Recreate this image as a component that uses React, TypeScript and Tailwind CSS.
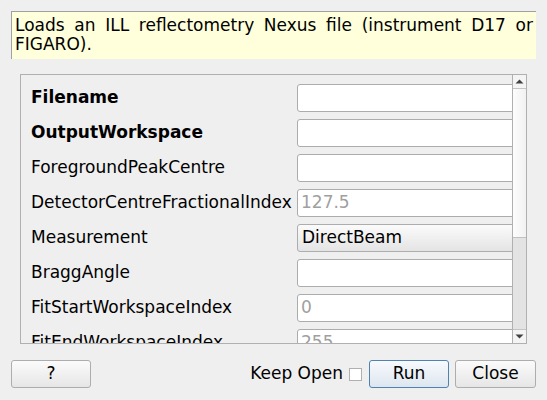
import React from "react";

const rows: { label: string; bold?: boolean; kind: "input" | "combo"; value?: string; placeholder?: string }[] = [
  { label: "Filename", bold: true, kind: "input" },
  { label: "OutputWorkspace", bold: true, kind: "input" },
  { label: "ForegroundPeakCentre", kind: "input" },
  { label: "DetectorCentreFractionalIndex", kind: "input", placeholder: "127.5" },
  { label: "Measurement", kind: "combo", value: "DirectBeam" },
  { label: "BraggAngle", kind: "input" },
  { label: "FitStartWorkspaceIndex", kind: "input", placeholder: "0" },
  { label: "FitEndWorkspaceIndex", kind: "input", placeholder: "255" },
];

export default function App() {
  return (
    <div
      className="w-[547px] h-[400px] bg-[#efefef] text-[17px] text-black overflow-hidden flex flex-col"
      style={{ fontFamily: '"DejaVu Sans", sans-serif' }}
    >
      <div className="mt-[11px] ml-[11px] w-[525px] h-[48px] border-l border-t border-[#a0a0a0] bg-[#ffffdc] pt-[4px] pl-[3px] pr-[3px] leading-[19px] text-justify">
        Loads an ILL reflectometry Nexus file (instrument D17 or FIGARO).
      </div>

      <div className="mt-[15px] ml-[20px] w-[507px] h-[270px] border border-[#b0b0b0] flex">
        <div className="w-[491px] h-full overflow-hidden">
          <div className="flex flex-col gap-[7px] pt-[9px] pl-[10px]">
            {rows.map((r) => (
              <div key={r.label} className="flex items-center h-[28px] shrink-0">
                <div className={`w-[266px] shrink-0 whitespace-nowrap ${r.bold ? "font-bold" : ""}`}>{r.label}</div>
                {r.kind === "combo" ? (
                  <div className="w-[222px] h-[28px] shrink-0 rounded-[3px] border border-[#adadad] bg-gradient-to-b from-[#fbfbfb] to-[#e4e4e4] flex items-center pl-[4px]">
                    {r.value}
                  </div>
                ) : (
                  <div className="w-[222px] h-[28px] shrink-0 rounded-[3px] border border-[#acacac] bg-white flex items-center pl-[3px] text-[#a0a0a0]">
                    {r.placeholder ?? ""}
                  </div>
                )}
              </div>
            ))}
          </div>
        </div>
        <div className="w-[14px] h-full border-l border-[#b0b0b0] flex flex-col bg-[#e3e3e3]">
          <div className="h-[14px] shrink-0 bg-[#f4f4f4] border-b border-[#c4c4c4] flex items-center justify-center">
            <svg width="9" height="5" viewBox="0 0 9 5">
              <path d="M0.5 4.5 L4.5 0.5 L8.5 4.5 Z" fill="#404040" />
            </svg>
          </div>
          <div className="h-[149px] shrink-0 bg-gradient-to-r from-[#fdfdfd] to-[#f1f1f1] border-b border-[#c0c0c0]" />
          <div className="flex-1" />
          <div className="h-[14px] shrink-0 bg-[#f4f4f4] border-t border-[#c4c4c4] flex items-center justify-center">
            <svg width="9" height="5" viewBox="0 0 9 5">
              <path d="M0.5 0.5 L4.5 4.5 L8.5 0.5 Z" fill="#404040" />
            </svg>
          </div>
        </div>
      </div>

      <div className="mt-[16px] mx-[11px] flex items-center h-[28px]">
        <button className="w-[80px] h-[28px] rounded-[3px] border border-[#adadad] bg-gradient-to-b from-[#fbfbfb] to-[#e6e6e6] flex items-center justify-center">
          ?
        </button>
        <div className="flex-1" />
        <span className="mr-[6px]">Keep Open</span>
        <div className="w-[13px] h-[13px] border border-[#b0b0b0] bg-white mr-[7px]" />
        <button className="w-[80px] h-[28px] rounded-[3px] border border-[#4f81b3] bg-gradient-to-b from-[#f7fafd] to-[#dde6ef] flex items-center justify-center">
          Run
        </button>
        <button className="ml-[6px] w-[81px] h-[28px] rounded-[3px] border border-[#adadad] bg-gradient-to-b from-[#fbfbfb] to-[#e6e6e6] flex items-center justify-center">
          Close
        </button>
      </div>
    </div>
  );
}
